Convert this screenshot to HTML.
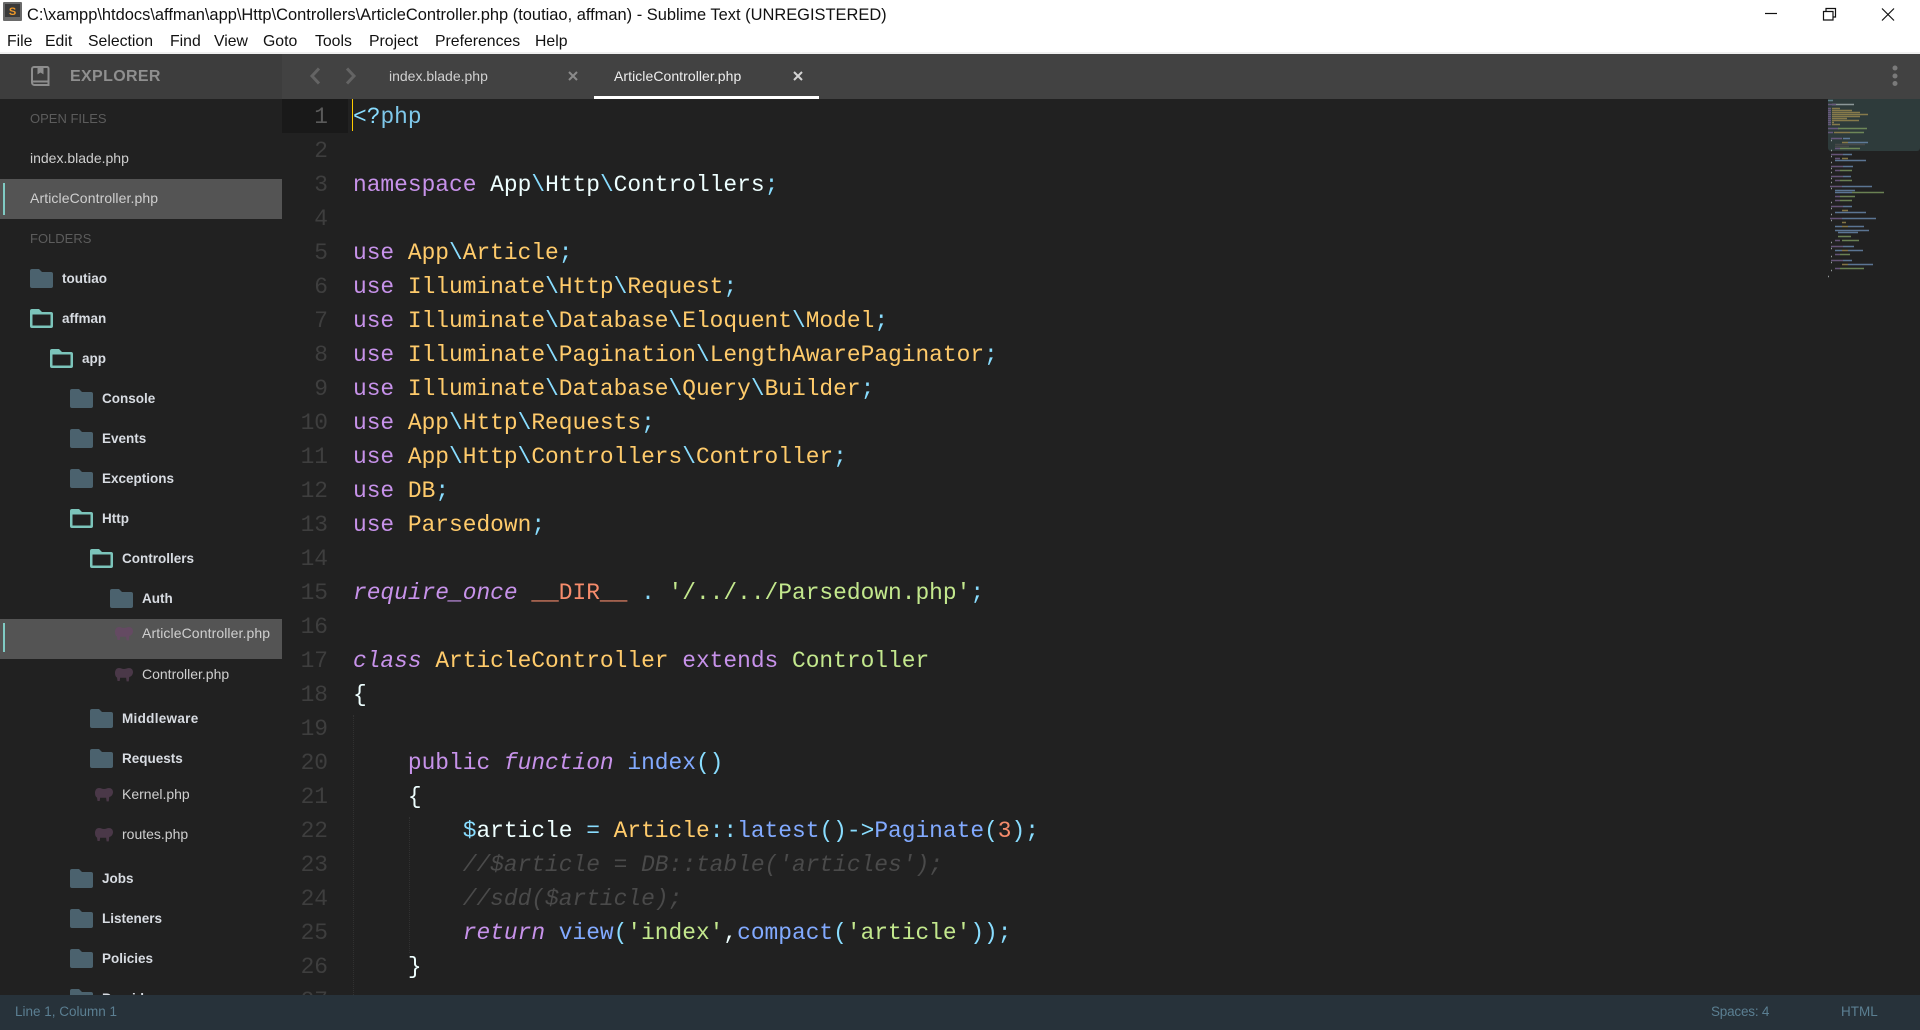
<!DOCTYPE html>
<html lang="en"><head><meta charset="utf-8"><title>Sublime Text</title>
<style>
*{box-sizing:border-box}
html,body{margin:0;padding:0;width:1920px;height:1030px;overflow:hidden;background:#212121}
body{position:relative;font-family:"Liberation Sans",sans-serif}
.a{position:absolute;white-space:nowrap}
#top{left:0;top:0;width:1920px;height:54px;background:#fff;border-bottom:2px solid #f0f0f0}
.m{top:32px;line-height:20px;font-size:15.8px;color:#111}
#hdr{left:0;top:54px;width:1920px;height:45px;background:#424242}
#hdl{left:0;top:54px;width:282px;height:45px;background:#3d3d3d}
.s{line-height:20px;font-size:14px;color:#cfcfcf}
.b{font-weight:bold;font-size:13.5px;color:#d8dce2;margin-top:1px}
.h{color:#5c5c5c;font-size:13px}
.sel{left:0;width:282px;height:40px;background:#545454}
.mk{left:3px;width:2px;background:#80cbc4}
#ln{left:282px;top:100px;width:46px;height:895px;overflow:hidden;text-align:right;font:22.86px/34px "Liberation Mono",monospace;color:#3e3e3e;white-space:pre}
#code{left:353px;top:100px;width:1470px;height:895px;overflow:hidden;font:22.86px/34px "Liberation Mono",monospace;color:#eeffff;white-space:pre;margin:0}
.k{color:#c792ea}.i{color:#c792ea;font-style:italic}.y{color:#ffcb6b}.g{color:#c3e88d}.f{color:#82aaff}.p{color:#89ddff}.o{color:#f78c6c}.c{color:#4a4a4a;font-style:italic}
#st{left:0;top:995px;width:1920px;height:35px;background:#27323a}
.t{top:1002px;line-height:20px;font-size:13.5px;color:#5b7f92}
</style></head><body>
<svg width="0" height="0" style="position:absolute"><defs>
<symbol id="fc" viewBox="0 0 23 19"><path fill="#4b626e" d="M2 0h7l3 3h9a2 2 0 0 1 2 2v12a2 2 0 0 1-2 2H2a2 2 0 0 1-2-2V2a2 2 0 0 1 2-2z"/></symbol>
<symbol id="fo" viewBox="0 0 23 19"><path fill="#7cc5bb" fill-rule="evenodd" d="M2 0h7l3 3h9a2 2 0 0 1 2 2v12a2 2 0 0 1-2 2H2a2 2 0 0 1-2-2V2a2 2 0 0 1 2-2zM2.500 5.500v11h18v-11z"/></symbol>
<symbol id="el" viewBox="0 0 18 14"><path fill="currentColor" d="M4 0C1.500 0 0 2 0 5c0 2.500 .8 4 2 4.500L2.500 13h2.200l.4-3.200h6l.5 3.600h2.200l.4-4.400C16.500 8.500 18 6.500 18 4c0-2.400-1.800-4-4-4-1.800 0-3 1-5 1S6 0 4 0z"/></symbol>
</defs></svg>

<div class="a" id="top"></div>
<svg class="a" style="left:3px;top:2px" width="20" height="20" viewBox="0 0 20 20"><rect x="0" y="0" width="19" height="19" rx="1" fill="#6a6a6a"/><rect x="2" y="2" width="15" height="13" fill="#3a3a3a"/><text x="9.500" y="13" font-family="Liberation Sans" font-weight="bold" font-size="11" fill="#f09a2a" text-anchor="middle">S</text></svg>
<div class="a" style="left:27px;top:5px;line-height:20px;font-size:16.45px;color:#111">C:\xampp\htdocs\affman\app\Http\Controllers\ArticleController.php (toutiao, affman) - Sublime Text (UNREGISTERED)</div>
<div class="a m" style="left:7px">File</div><div class="a m" style="left:45px">Edit</div><div class="a m" style="left:88px">Selection</div><div class="a m" style="left:170px">Find</div><div class="a m" style="left:214px">View</div><div class="a m" style="left:263px">Goto</div><div class="a m" style="left:315px">Tools</div><div class="a m" style="left:369px">Project</div><div class="a m" style="left:435px">Preferences</div><div class="a m" style="left:535px">Help</div>
<svg class="a" style="left:1760px;top:4px" width="140" height="20" fill="none" stroke="#111" stroke-width="1.200"><path d="M5 9.500h12"/><path d="M63.500 7.500h9.500v8.500h-9.500zM66 7.500V4.500h9.500v8.500h-2.500"/><path d="M122 4.500l12 12M134 4.500l-12 12"/></svg>

<div class="a" id="hdr"></div><div class="a" id="hdl"></div>
<svg class="a" style="left:31px;top:66px" width="19" height="21" viewBox="0 0 19 21" fill="none" stroke="#8d8d8d" stroke-width="2"><path d="M3 1h13a1.500 1.500 0 0 1 1.500 1.500V19H3.500A2.500 2.500 0 0 1 1 16.500V3a2 2 0 0 1 2-2zM1 15.500h16.500"/><path d="M7 1v6.500l2.500-1.500 2.500 1.500V1" fill="#8d8d8d" stroke-width="1"/></svg>
<div class="a" style="left:70px;top:67px;line-height:20px;font-size:16px;font-weight:bold;letter-spacing:.35px;color:#8f8f8f">EXPLORER</div>
<svg class="a" style="left:305px;top:64px" width="56" height="24" fill="none" stroke="#646464" stroke-width="3"><path d="M14 4.500L7 12l7 7.500"/><path d="M42 4.500L49 12l-7 7.500"/></svg>
<div class="a s" style="left:389px;top:66px;color:#d0d0d0">index.blade.php</div>
<svg class="a" style="left:567px;top:70px" width="12" height="12" stroke="#8a8a8a" stroke-width="2"><path d="M2 2l8 8M10 2l-8 8"/></svg>
<div class="a s" style="left:614px;top:66px;color:#eee;letter-spacing:.06px">ArticleController.php</div>
<svg class="a" style="left:792px;top:70px" width="12" height="12" stroke="#d4d4d4" stroke-width="2"><path d="M2 2l8 8M10 2l-8 8"/></svg>
<div class="a" style="left:594px;top:96px;width:225px;height:3px;background:#fff"></div>
<svg class="a" style="left:1890px;top:64px" width="10" height="24" fill="#7a7a7a"><circle cx="5" cy="4" r="2.500"/><circle cx="5" cy="12" r="2.500"/><circle cx="5" cy="19.500" r="2.500"/></svg>

<div class="a s h" style="left:30px;top:109px">OPEN FILES</div>
<div class="a s" style="left:30px;top:148px">index.blade.php</div>
<div class="a sel" style="top:179px"></div><div class="a mk" style="top:183px;height:32px"></div>
<div class="a s" style="left:30px;top:188px;letter-spacing:.1px">ArticleController.php</div>
<div class="a s h" style="left:30px;top:229px">FOLDERS</div>

<svg class="a" style="left:30px;top:269px" width="23" height="19"><use href="#fc"/></svg><div class="a s b" style="left:62px;top:268px">toutiao</div>
<svg class="a" style="left:30px;top:309px" width="23" height="19"><use href="#fo"/></svg><div class="a s b" style="left:62px;top:308px">affman</div>
<svg class="a" style="left:50px;top:349px" width="23" height="19"><use href="#fo"/></svg><div class="a s b" style="left:82px;top:348px">app</div>
<svg class="a" style="left:70px;top:389px" width="23" height="19"><use href="#fc"/></svg><div class="a s b" style="left:102px;top:388px">Console</div>
<svg class="a" style="left:70px;top:429px" width="23" height="19"><use href="#fc"/></svg><div class="a s b" style="left:102px;top:428px">Events</div>
<svg class="a" style="left:70px;top:469px" width="23" height="19"><use href="#fc"/></svg><div class="a s b" style="left:102px;top:468px">Exceptions</div>
<svg class="a" style="left:70px;top:509px" width="23" height="19"><use href="#fo"/></svg><div class="a s b" style="left:102px;top:508px">Http</div>
<svg class="a" style="left:90px;top:549px" width="23" height="19"><use href="#fo"/></svg><div class="a s b" style="left:122px;top:548px">Controllers</div>
<svg class="a" style="left:110px;top:589px" width="23" height="19"><use href="#fc"/></svg><div class="a s b" style="left:142px;top:588px">Auth</div>
<div class="a sel" style="top:619px"></div><div class="a mk" style="top:623px;height:29px"></div>
<svg class="a" style="left:115px;top:627px;color:#644a62" width="18" height="14"><use href="#el"/></svg><div class="a s" style="left:142px;top:623px;letter-spacing:.1px">ArticleController.php</div>
<svg class="a" style="left:115px;top:668px;color:#4a3848" width="18" height="14"><use href="#el"/></svg><div class="a s" style="left:142px;top:664px">Controller.php</div>
<svg class="a" style="left:90px;top:709px" width="23" height="19"><use href="#fc"/></svg><div class="a s b" style="left:122px;top:708px;letter-spacing:.3px">Middleware</div>
<svg class="a" style="left:90px;top:749px" width="23" height="19"><use href="#fc"/></svg><div class="a s b" style="left:122px;top:748px">Requests</div>
<svg class="a" style="left:95px;top:788px;color:#4a3848" width="18" height="14"><use href="#el"/></svg><div class="a s" style="left:122px;top:784px">Kernel.php</div>
<svg class="a" style="left:95px;top:828px;color:#4a3848" width="18" height="14"><use href="#el"/></svg><div class="a s" style="left:122px;top:824px">routes.php</div>
<svg class="a" style="left:70px;top:869px" width="23" height="19"><use href="#fc"/></svg><div class="a s b" style="left:102px;top:868px">Jobs</div>
<svg class="a" style="left:70px;top:909px" width="23" height="19"><use href="#fc"/></svg><div class="a s b" style="left:102px;top:908px">Listeners</div>
<svg class="a" style="left:70px;top:949px" width="23" height="19"><use href="#fc"/></svg><div class="a s b" style="left:102px;top:948px">Policies</div>
<svg class="a" style="left:70px;top:989px" width="23" height="19"><use href="#fc"/></svg><div class="a s b" style="left:102px;top:988px">Providers</div>

<div class="a" style="left:282px;top:99px;width:66px;height:34px;background:#191919"></div>
<div class="a" style="left:352px;top:99px;width:1px;height:32px;background:#ffcc00"></div>
<div class="a" style="left:353px;top:715px;height:280px;border-left:1px dotted #313131"></div>
<div class="a" style="left:409px;top:817px;height:136px;border-left:1px dotted #313131"></div>
<div class="a" id="ln"><span style="color:#5a5a5a">1</span>
2
3
4
5
6
7
8
9
10
11
12
13
14
15
16
17
18
19
20
21
22
23
24
25
26
27</div>
<pre class="a" id="code"><span class="p">&lt;?</span><span style="color:#7fc8ea">php</span>

<span class="k">namespace</span> App<span class="p">\</span>Http<span class="p">\</span>Controllers<span class="p">;</span>

<span class="k">use</span> <span class="y">App</span><span class="p">\</span><span class="y">Article</span><span class="p">;</span>
<span class="k">use</span> <span class="y">Illuminate</span><span class="p">\</span><span class="y">Http</span><span class="p">\</span><span class="y">Request</span><span class="p">;</span>
<span class="k">use</span> <span class="y">Illuminate</span><span class="p">\</span><span class="y">Database</span><span class="p">\</span><span class="y">Eloquent</span><span class="p">\</span><span class="y">Model</span><span class="p">;</span>
<span class="k">use</span> <span class="y">Illuminate</span><span class="p">\</span><span class="y">Pagination</span><span class="p">\</span><span class="y">LengthAwarePaginator</span><span class="p">;</span>
<span class="k">use</span> <span class="y">Illuminate</span><span class="p">\</span><span class="y">Database</span><span class="p">\</span><span class="y">Query</span><span class="p">\</span><span class="y">Builder</span><span class="p">;</span>
<span class="k">use</span> <span class="y">App</span><span class="p">\</span><span class="y">Http</span><span class="p">\</span><span class="y">Requests</span><span class="p">;</span>
<span class="k">use</span> <span class="y">App</span><span class="p">\</span><span class="y">Http</span><span class="p">\</span><span class="y">Controllers</span><span class="p">\</span><span class="y">Controller</span><span class="p">;</span>
<span class="k">use</span> <span class="y">DB</span><span class="p">;</span>
<span class="k">use</span> <span class="y">Parsedown</span><span class="p">;</span>

<span class="i">require_once</span> <span class="o">__DIR__</span> <span class="p">.</span> <span class="g">'/../../Parsedown.php'</span><span class="p">;</span>

<span class="i">class</span> <span class="y">ArticleController</span> <span class="k">extends</span> <span class="g">Controller</span>
{

    <span class="k">public</span> <span class="i">function</span> <span class="f">index</span><span class="p">()</span>
    {
        <span class="p">$</span>article <span class="p">=</span> <span class="y">Article</span><span class="p">::</span><span class="f">latest</span><span class="p">()-&gt;</span><span class="f">Paginate</span><span class="p">(</span><span class="o">3</span><span class="p">);</span>
        <span class="c">//$article = DB::table('articles');</span>
        <span class="c">//sdd($article);</span>
        <span class="i">return</span> <span class="f">view</span><span class="p">(</span><span class="g">'index'</span>,<span class="f">compact</span><span class="p">(</span><span class="g">'article'</span><span class="p">));</span>
    }
</pre>

<div class="a" style="left:1828px;top:99px;width:92px;height:52px;background:#2e3b3b;border-radius:0 0 3px 3px"></div>
<svg class="a" style="left:1828px;top:99px;opacity:.8" width="92" height="180" viewBox="1828 99 92 180" fill="none" stroke-width="1.500">
<path stroke="#6c8f9c" d="M1828 100.500h5"/>
<path stroke="#a3aeb0" d="M1832 104.500h22"/>
<path stroke="#75608c" d="M1828 104.500h8M1828 108.500h3M1828 110.500h3M1828 112.500h3M1828 114.500h3M1828 116.500h3M1828 118.500h3M1828 120.500h3M1828 122.500h3M1828 124.500h3M1828 128.500h11M1828 132.500h5M1831 138.500h11M1835 148.500h5M1831 154.500h12M1835 158.500h5M1831 166.500h12M1835 170.500h5M1831 176.500h12M1835 180.500h5M1830 186.500h12M1835 196.500h5M1835 200.500h5M1831 206.500h12M1830 218.500h12M1835 240.500h5M1831 246.500h12M1835 254.500h5M1831 260.500h12M1835 268.500h5"/>
<path stroke="#9c8a50" d="M1832 108.500h8M1832 110.500h20M1832 112.500h28M1832 114.500h36M1832 116.500h28M1832 118.500h15M1832 120.500h27M1832 122.500h2M1832 124.500h8M1834 132.500h16M1842 142.500h6M1842 158.500h6M1842 210.500h6M1842 222.500h4M1842 226.500h6M1842 250.500h6M1842 264.500h6"/>
<path stroke="#7d9a60" d="M1838 128.500h29M1850 132.500h14M1840 148.500h20M1840 170.500h12M1840 180.500h12M1852 192.500h32M1840 196.500h15M1840 200.500h12M1842 240.500h17M1838 236.500h13M1840 254.500h10M1840 268.500h24"/>
<path stroke="#6a8ab0" d="M1843 138.500h7M1848 142.500h20M1843 154.500h9M1835 160.500h31M1843 166.500h10M1843 176.500h8M1842 186.500h30M1835 190.500h20M1835 192.500h17M1843 206.500h9M1835 212.500h31M1842 218.500h34M1835 226.500h7M1848 226.500h16M1835 230.500h34M1838 232.500h20M1843 246.500h11M1835 250.500h7M1848 250.500h15M1843 260.500h9M1848 264.500h25"/>
<path stroke="#b0b8ba" d="M1831 140.500h1M1831 150.500h1M1831 156.500h1M1831 162.500h1M1831 168.500h1M1831 172.500h1M1831 178.500h1M1831 182.500h1M1831 188.500h1M1831 202.500h1M1831 208.500h1M1831 214.500h1M1831 220.500h1M1831 242.500h1M1831 248.500h1M1831 256.500h1M1831 262.500h1M1831 270.500h1M1828 276.500h1"/>
<path stroke="#4c4c4c" d="M1835 144.500h30M1835 146.500h14"/>
</svg>

<div class="a" id="st"></div>
<div class="a t" style="left:15px">Line 1, Column 1</div>
<div class="a t" style="left:1711px;letter-spacing:-.2px">Spaces: 4</div>
<div class="a t" style="left:1841px">HTML</div>
</body></html>
